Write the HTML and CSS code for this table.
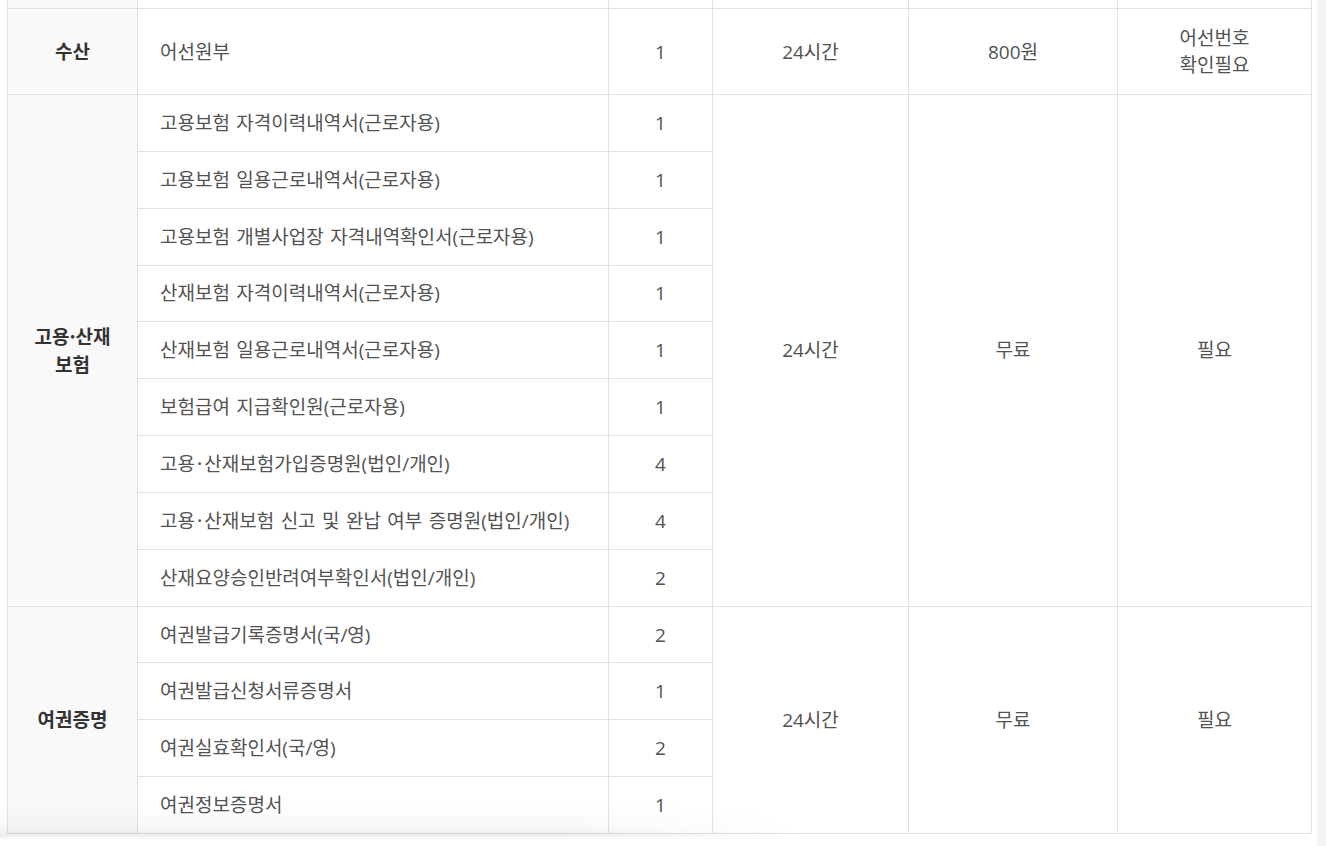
FILE: index.html
```html
<!DOCTYPE html>
<html lang="ko">
<head>
<meta charset="utf-8">
<title>발급 문서 목록</title>
<link rel="stylesheet" href="styles.css">
</head>
<body>
<div class="page">
  <div class="table-wrap">
    <table class="doc-table">
      <colgroup>
        <col class="c-cat">
        <col class="c-name">
        <col class="c-num">
        <col class="c-time">
        <col class="c-fee">
        <col class="c-note">
      </colgroup>
      <tbody>
        <tr class="tail-row">
          <th></th><td></td><td></td><td></td><td></td><td></td>
        </tr>
        <tr class="tall">
          <th>수산</th>
          <td class="name">어선원부</td>
          <td class="num">1</td>
          <td class="center">24시간</td>
          <td class="center">800원</td>
          <td class="center two-line">어선번호<br>확인필요</td>
        </tr>
        <tr>
          <th rowspan="9" class="multi">고용<span class="dot">·</span>산재<br>보험</th>
          <td class="name">고용보험 자격이력내역서(근로자용)</td>
          <td class="num">1</td>
          <td class="center" rowspan="9">24시간</td>
          <td class="center" rowspan="9">무료</td>
          <td class="center" rowspan="9">필요</td>
        </tr>
        <tr><td class="name">고용보험 일용근로내역서(근로자용)</td><td class="num">1</td></tr>
        <tr><td class="name">고용보험 개별사업장 자격내역확인서(근로자용)</td><td class="num">1</td></tr>
        <tr><td class="name">산재보험 자격이력내역서(근로자용)</td><td class="num">1</td></tr>
        <tr><td class="name">산재보험 일용근로내역서(근로자용)</td><td class="num">1</td></tr>
        <tr><td class="name">보험급여 지급확인원(근로자용)</td><td class="num">1</td></tr>
        <tr><td class="name">고용<span class="dot">·</span>산재보험가입증명원(법인/개인)</td><td class="num">4</td></tr>
        <tr><td class="name">고용<span class="dot">·</span>산재보험 신고 및 완납 여부 증명원(법인/개인)</td><td class="num">4</td></tr>
        <tr><td class="name">산재요양승인반려여부확인서(법인/개인)</td><td class="num">2</td></tr>
        <tr>
          <th rowspan="4">여권증명</th>
          <td class="name">여권발급기록증명서(국/영)</td>
          <td class="num">2</td>
          <td class="center" rowspan="4">24시간</td>
          <td class="center" rowspan="4">무료</td>
          <td class="center" rowspan="4">필요</td>
        </tr>
        <tr><td class="name">여권발급신청서류증명서</td><td class="num">1</td></tr>
        <tr><td class="name">여권실효확인서(국/영)</td><td class="num">2</td></tr>
        <tr><td class="name">여권정보증명서</td><td class="num">1</td></tr>
      </tbody>
    </table>
    <div class="bottom-shade"></div>
  </div>
  <div class="side-strip"></div>
</div>
</body>
</html>
```

FILE: styles.css
```css
html, body {
  margin: 0;
  padding: 0;
  background: #ffffff;
}

body {
  font-family: "Open Sans", "Noto Sans CJK KR", sans-serif;
  color: #525252;
  overflow: hidden;
}

.page {
  display: flex;
  width: 1326px;
  height: 846px;
}

.table-wrap {
  position: relative;
  padding-left: 7px;
  width: 1305px;
  flex: none;
}

.doc-table {
  width: 1305px;
  border-collapse: collapse;
  table-layout: fixed;
  font-size: 19px;
}

.c-cat { width: 130px; }
.c-name { width: 471px; }
.c-num { width: 104px; }
.c-time { width: 196px; }
.c-fee { width: 209px; }
.c-note { width: 194px; }

.doc-table th,
.doc-table td {
  border: 1px solid #e1e1e1;
  padding: 16px 10px;
  line-height: 20px;
  height: 23.85px;
  vertical-align: middle;
  font-weight: 400;
}

.doc-table th {
  background: #f9f9f9;
  color: #333333;
  font-weight: 700;
  text-align: center;
}

.doc-table th.multi {
  line-height: 28px;
}

.doc-table .name {
  padding-left: 22px;
  text-align: left;
  word-spacing: 1.5px;
}

.doc-table .dot {
  font-family: "Noto Sans CJK KR", sans-serif;
}

.doc-table td .dot {
  margin: 0 2px;
}

.doc-table .num,
.doc-table .center {
  text-align: center;
}

.doc-table .tail-row th,
.doc-table .tail-row td {
  border-top: 0;
  padding: 0;
  height: 8px;
  line-height: 0;
}

.doc-table .tall th,
.doc-table .tall td {
  padding-top: 16px;
  padding-bottom: 15px;
  line-height: 25px;
  height: 54px;
}

.doc-table .tall .two-line {
  line-height: 27px;
}

.bottom-shade {
  position: absolute;
  left: 0;
  top: 804px;
  width: 800px;
  height: 36px;
  pointer-events: none;
  background: linear-gradient(to bottom, rgba(0, 0, 0, 0) 0%, rgba(0, 0, 0, 0.03) 70%, rgba(0, 0, 0, 0.07) 86%, rgba(0, 0, 0, 0) 100%);
  -webkit-mask-image: linear-gradient(to right, #000 0%, #000 70%, rgba(0, 0, 0, 0) 100%);
  mask-image: linear-gradient(to right, #000 0%, #000 70%, rgba(0, 0, 0, 0) 100%);
}

.side-strip {
  margin-left: 5px;
  width: 9px;
  height: 846px;
  background: #f5f5f5;
}
```
